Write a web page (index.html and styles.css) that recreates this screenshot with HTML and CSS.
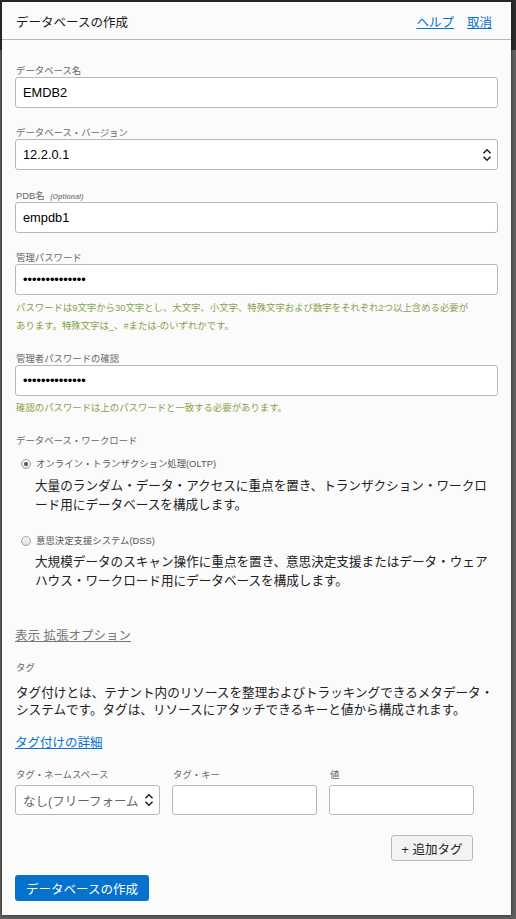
FILE: index.html
```html
<!DOCTYPE html>
<html lang="ja">
<head>
<meta charset="utf-8">
<title>データベースの作成</title>
<link rel="stylesheet" href="styles.css">
</head>
<body>
<div class="panel">
  <header class="panel-header">
    <h1 class="title">データベースの作成</h1>
    <nav class="header-links">
      <a href="#" class="link">ヘルプ</a>
      <a href="#" class="link">取消</a>
    </nav>
  </header>
  <form class="panel-body">
    <div class="field f1">
      <label class="label">データベース名</label>
      <input class="input" type="text" value="EMDB2">
    </div>
    <div class="field f2">
      <label class="label">データベース・バージョン</label>
      <div class="input select">
        <span class="select-text">12.2.0.1</span>
        <svg class="chev" width="10" height="14" viewBox="0 0 10 14"><path d="M1.5 5.2 L5 1.8 L8.5 5.2 M1.5 8.8 L5 12.2 L8.5 8.8" fill="none" stroke="#222" stroke-width="1.6"/></svg>
      </div>
    </div>
    <div class="field f3">
      <label class="label">PDB名 <span class="optional">(Optional)</span></label>
      <input class="input" type="text" value="empdb1">
    </div>
    <div class="field f4">
      <label class="label">管理パスワード</label>
      <input class="input" type="password" value="xxxxxxxxxxxxxx">
    </div>
    <p class="help h1">パスワードは9文字から30文字とし、大文字、小文字、特殊文字および数字をそれぞれ2つ以上含める必要があります。特殊文字は_、#または-のいずれかです。</p>
    <div class="field f5">
      <label class="label">管理者パスワードの確認</label>
      <input class="input" type="password" value="xxxxxxxxxxxxxx">
    </div>
    <p class="help h2">確認のパスワードは上のパスワードと一致する必要があります。</p>

    <div class="label workload">データベース・ワークロード</div>
    <div class="radio-row r1">
      <span class="radio checked"></span>
      <span class="radio-label">オンライン・トランザクション処理(OLTP)</span>
    </div>
    <p class="radio-desc d1">大量のランダム・データ・アクセスに重点を置き、トランザクション・ワークロード用にデータベースを構成します。</p>
    <div class="radio-row r2">
      <span class="radio"></span>
      <span class="radio-label">意思決定支援システム(DSS)</span>
    </div>
    <p class="radio-desc d2">大規模データのスキャン操作に重点を置き、意思決定支援またはデータ・ウェアハウス・ワークロード用にデータベースを構成します。</p>

    <a href="#" class="advanced">表示 拡張オプション</a>

    <div class="label tag-label">タグ</div>
    <p class="tag-desc">タグ付けとは、テナント内のリソースを整理およびトラッキングできるメタデータ・システムです。タグは、リソースにアタッチできるキーと値から構成されます。</p>
    <a href="#" class="link tag-link">タグ付けの詳細</a>

    <div class="tag-row">
      <div class="tag-col">
        <label class="label">タグ・ネームスペース</label>
        <div class="input select tag-select">
          <span class="select-text muted">なし(フリーフォーム</span>
          <svg class="chev" width="10" height="14" viewBox="0 0 10 14"><path d="M1.5 5.2 L5 1.8 L8.5 5.2 M1.5 8.8 L5 12.2 L8.5 8.8" fill="none" stroke="#222" stroke-width="1.6"/></svg>
        </div>
      </div>
      <div class="tag-col">
        <label class="label">タグ・キー</label>
        <input class="input tag-input" type="text">
      </div>
      <div class="tag-col">
        <label class="label">値</label>
        <input class="input tag-input" type="text">
      </div>
    </div>
    <div class="add-row">
      <button type="button" class="btn-secondary">+ 追加タグ</button>
    </div>
    <div class="submit-row">
      <button type="button" class="btn-primary">データベースの作成</button>
    </div>
  </form>
</div>
</body>
</html>
```

FILE: styles.css
```css
* { box-sizing: border-box; }
html, body { margin: 0; padding: 0; }
body {
  width: 516px;
  height: 919px;
  overflow: hidden;
  background: linear-gradient(#2c2c2c 0, #2c2c2c 50px, #5e5e5e 50px, #5e5e5e 100%);
  font-family: "Liberation Sans", "Noto Sans CJK JP", sans-serif;
  color: #222;
}
.panel {
  margin: 2px 0 0 2px;
  width: 509px;
  height: 913px;
  background: #fbfbfb;
  box-shadow: 0 0 3px rgba(0,0,0,0.6);
  display: flex;
  flex-direction: column;
}
.panel-header {
  height: 38px;
  border-bottom: 1px solid #b7b9c1;
  display: flex;
  align-items: center;
  justify-content: space-between;
  padding: 4px 19px 0 14px;
}
.title {
  margin: 0;
  font-size: 12.5px;
  font-weight: normal;
  color: #1a1a1a;
  line-height: 16px;
}
.header-links { display: flex; gap: 13px; }
.link {
  color: #0572ce;
  font-size: 12.5px;
  text-decoration: underline;
  line-height: 16px;
}
.panel-body {
  padding: 24px 13px 0 13px;
  margin: 0;
  display: flex;
  flex-direction: column;
  align-items: flex-start;
}
.field { display: flex; flex-direction: column; width: 483px; }
.label {
  display: block;
  font-size: 9.4px;
  line-height: 13px;
  height: 13px;
  color: #666;
  padding-left: 1px;
}
.optional {
  font-size: 7px;
  font-style: italic;
  font-weight: bold;
  color: #8a8a8a;
  margin-left: 3px;
}
.input {
  display: flex;
  align-items: center;
  width: 483px;
  height: 31px;
  border: 1px solid #b5b8c0;
  border-radius: 3px;
  background: #fff;
  padding: 0 7px;
  font-family: "Liberation Sans", "Noto Sans CJK JP", sans-serif;
  font-size: 12.8px;
  color: #000;
  outline: none;
}
.select { justify-content: space-between; padding-right: 5px; }
.select-text { white-space: nowrap; overflow: hidden; }
.chev { flex: none; }
.f2 { margin-top: 18px; }
.f3 { margin-top: 19px; }
.f4 { margin-top: 18px; }
.f5 { margin-top: 17px; }
.help {
  margin: 0;
  font-size: 9.4px;
  line-height: 18px;
  color: #86a146;
  max-width: 458px;
  padding-left: 1px;
}
.h1 { margin-top: 4px; }
.h2 { margin-top: 3px; }
.workload { margin-top: 17px; }
.radio-row {
  display: flex;
  align-items: center;
  height: 12px;
  padding-left: 6px;
  gap: 5px;
}
.r1 { margin-top: 11px; }
.r2 { margin-top: 20px; }
.radio {
  width: 10px;
  height: 10px;
  border-radius: 50%;
  border: 1px solid #a3a3a3;
  background: linear-gradient(#fafafa, #dcdcdc);
  position: relative;
  flex: none;
}
.radio.checked::after {
  content: "";
  position: absolute;
  left: 2px; top: 2px;
  width: 4px; height: 4px;
  border-radius: 50%;
  background: #555;
}
.radio-label { font-size: 9.4px; line-height: 12px; color: #555; }
.radio-desc {
  margin: 0;
  padding-left: 20px;
  width: 483px;
  font-size: 12.6px;
  line-height: 19px;
  color: #222;
}
.d1 { margin-top: 7px; }
.d2 { margin-top: 6px; }
.advanced {
  margin-top: 36px;
  font-size: 12.5px;
  line-height: 18px;
  color: #777;
  text-decoration: underline;
}
.tag-label { margin-top: 16px; }
.tag-desc {
  margin: 11px 0 0 0;
  width: 483px;
  font-size: 12.6px;
  line-height: 17px;
  color: #222;
  padding-left: 1px;
}
.tag-link { margin-top: 15px; line-height: 18px; }
.tag-row {
  margin-top: 16px;
  display: grid;
  grid-template-columns: 145px 145px 145px;
  column-gap: 12px;
  width: 459px;
}
.tag-col { display: flex; flex-direction: column; }
.tag-col .label { margin-bottom: 4px; }
.tag-select, .tag-input { width: 145px; height: 30px; }
.tag-select { padding-right: 5px; }
.tag-select .select-text { font-size: 12.5px; }
.muted { color: #666; }
.add-row {
  margin-top: 20px;
  width: 458px;
  display: flex;
  justify-content: flex-end;
}
.btn-secondary {
  height: 26px;
  width: 82px;
  border: 1px solid #b5b8c0;
  border-radius: 3px;
  background: #f3f3f3;
  font-family: "Liberation Sans", "Noto Sans CJK JP", sans-serif;
  font-size: 12.5px;
  color: #222;
  padding: 0;
}
.submit-row { margin-top: 14px; }
.btn-primary {
  height: 26px;
  padding: 0 11px;
  border: none;
  border-radius: 3px;
  background: #0572ce;
  color: #fff;
  font-family: "Liberation Sans", "Noto Sans CJK JP", sans-serif;
  font-size: 12.5px;
}
```
